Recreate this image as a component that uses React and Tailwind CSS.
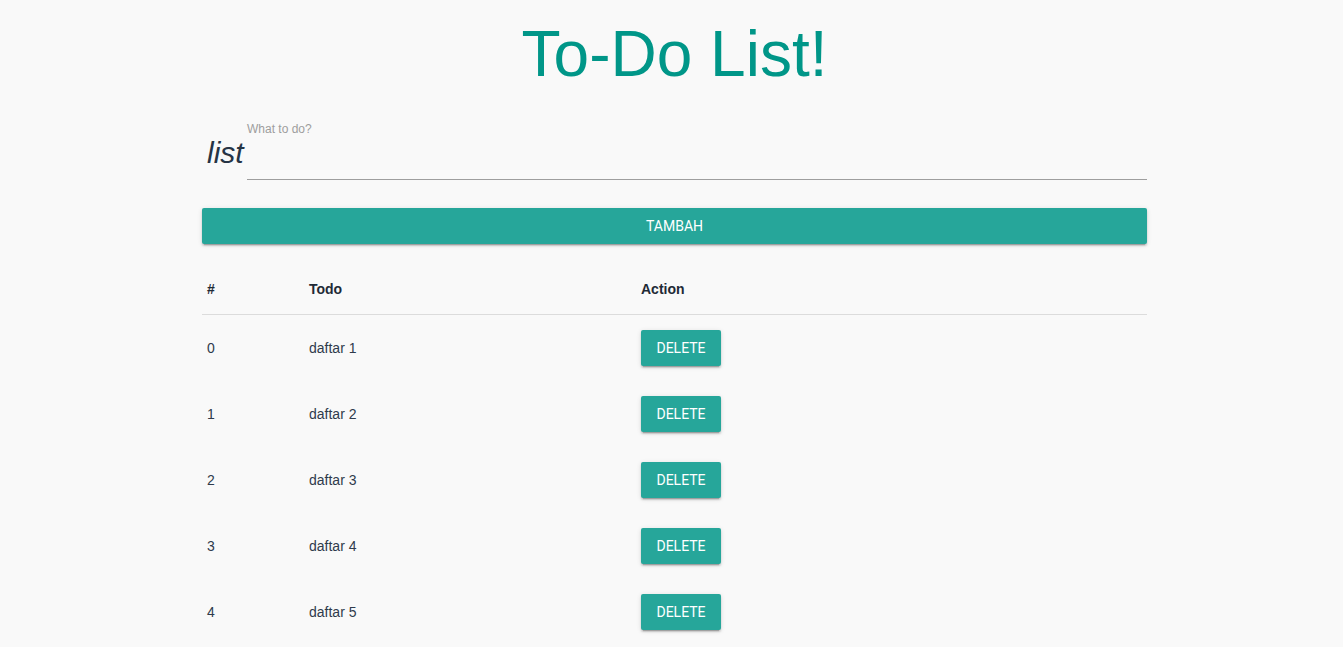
import React from "react";

const items = ["daftar 1", "daftar 2", "daftar 3", "daftar 4", "daftar 5"];

export default function App() {
  return (
    <div
      className="min-h-[647px] w-full bg-[#f9f9f9] pt-[20px]"
      style={{ fontFamily: '"Liberation Sans", Arial, sans-serif' }}
    >
      <h1 className="text-center text-[64px] leading-[69px] text-[#009688] font-normal ml-[202px] w-[945px]">
        To-Do List!
      </h1>

      <div className="ml-[202px] w-[945px] mt-[33px]">
        <div className="flex">
          <div className="w-[45px] pl-[5px] pt-[16px]">
            <span className="italic text-[30px] leading-[30px] text-[#263445]">list</span>
          </div>
          <div className="flex-1">
            <div className="text-[12px] leading-[14px] text-[#9e9e9e]">What to do?</div>
            <div className="h-[44px] border-b border-[#9e9e9e]"></div>
          </div>
        </div>

        <button
          className="mt-[28px] h-[36px] w-full rounded-[2px] bg-[#26a69a] text-white text-[14px] uppercase shadow-[0_2px_2px_0_rgba(0,0,0,0.14),0_1px_5px_0_rgba(0,0,0,0.12),0_3px_1px_-2px_rgba(0,0,0,0.2)]"
          style={{ fontFamily: "Roboto, sans-serif" }}
        >
          Tambah
        </button>

        <div className="mt-[18px]">
          <div className="grid grid-cols-[102px_332px_1fr] h-[53px] pt-[2px] items-center border-b border-[#dcdcdc] text-[14px] font-bold text-[#1f2a36]">
            <div className="pl-[5px]">#</div>
            <div className="pl-[5px]">Todo</div>
            <div className="pl-[5px]">Action</div>
          </div>
          {items.map((t, i) => (
            <div
              key={i}
              className="grid grid-cols-[102px_332px_1fr] h-[66px] items-center text-[14px] text-[#2f3b4c]"
            >
              <div className="pl-[5px]">{i}</div>
              <div className="pl-[5px]">{t}</div>
              <div className="pl-[5px]">
                <button
                  className="h-[36px] w-[80px] rounded-[2px] bg-[#26a69a] text-white text-[14px] uppercase shadow-[0_2px_2px_0_rgba(0,0,0,0.14),0_1px_5px_0_rgba(0,0,0,0.12),0_3px_1px_-2px_rgba(0,0,0,0.2)]"
                  style={{ fontFamily: "Roboto, sans-serif" }}
                >
                  Delete
                </button>
              </div>
            </div>
          ))}
        </div>
      </div>
    </div>
  );
}
